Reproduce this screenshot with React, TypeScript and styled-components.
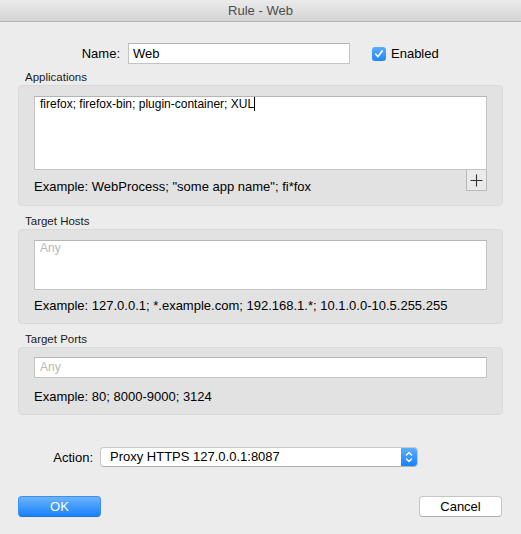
import React from "react";
import styled, { createGlobalStyle } from "styled-components";

const Global = createGlobalStyle`
  html, body { margin: 0; padding: 0; background: #ececec; }
  body { font-family: "Liberation Sans", Arial, sans-serif; color: #000; -webkit-font-smoothing: antialiased; }
  * { box-sizing: border-box; }
`;

const Win = styled.div`
  width: 521px;
  height: 534px;
  background: #ececec;
  display: flex;
  flex-direction: column;
  overflow: hidden;
`;

const TitleBar = styled.div`
  height: 22px;
  flex: none;
  background: linear-gradient(#ebebeb, #d4d4d4);
  border-bottom: 1px solid #b4b4b4;
  display: flex;
  align-items: center;
  justify-content: center;
  font-size: 13px;
  color: #4d4d4d;
`;

const Body = styled.div`
  display: flex;
  flex-direction: column;
  padding: 21px 18px 0 18px;
`;

const NameRow = styled.div`
  display: flex;
  align-items: center;
  height: 21px;
  padding-left: 62px;
`;

const FieldLabel = styled.span`
  font-size: 13px;
  width: 40px;
  text-align: right;
  margin-right: 8px;
`;

const TextInput = styled.div<{ $w?: number; $h?: number; $placeholder?: boolean; $small?: boolean; $lh?: number }>`
  width: ${(p) => (p.$w ? `${p.$w}px` : "auto")};
  height: ${(p) => p.$h ?? 21}px;
  background: #fff;
  border: 1px solid #c3c3c3;
  border-top-color: #b5b5b5;
  font-size: ${(p) => (p.$small ? 12 : 13)}px;
  line-height: ${(p) => p.$lh ?? (p.$small ? 14 : 17)}px;
  padding: ${(p) => (p.$small ? "0 5px" : "1px 4px 0 4px")};
  color: ${(p) => (p.$placeholder ? "#b8b8b8" : "#000")};
`;

const Caret = styled.span`
  display: inline-block;
  width: 1px;
  height: 14px;
  background: #000;
  vertical-align: -3px;
`;

const CheckWrap = styled.label`
  display: flex;
  align-items: center;
  margin-left: 22px;
  font-size: 13px;
  gap: 5px;
`;

const CheckBox = styled.span`
  width: 14px;
  height: 14px;
  border-radius: 3px;
  background: linear-gradient(#5aacfd, #1f86fd);
  display: flex;
  align-items: center;
  justify-content: center;
`;

const SectionLabel = styled.div<{ $top: number }>`
  font-size: 11.5px;
  line-height: 13px;
  margin-top: ${(p) => p.$top}px;
  margin-bottom: 1px;
  padding-left: 7px;
  color: #1a1a1a;
`;

const Group = styled.div<{ $pt: number; $pb: number }>`
  background: #e2e2e2;
  border: 1px solid #dadada;
  border-radius: 4px;
  padding: ${(p) => p.$pt}px 15px ${(p) => p.$pb}px 15px;
  display: flex;
  flex-direction: column;
`;

const Footer = styled.div`
  display: flex;
  align-items: flex-start;
  justify-content: space-between;
`;

const Example = styled.div<{ $mt: number }>`
  font-size: 13px;
  line-height: 16px;
  margin-top: ${(p) => p.$mt}px;
`;

const PlusButton = styled.div`
  width: 21px;
  height: 21px;
  border: 1px solid #b9b9b9;
  border-top: none;
  background: #eaeaea;
  display: flex;
  align-items: center;
  justify-content: center;
`;

const ActionRow = styled.div`
  display: flex;
  align-items: center;
  margin-top: 32px;
  padding-left: 32px;
`;

const ActionLabel = styled.span`
  font-size: 13px;
  width: 43px;
  text-align: right;
  margin-right: 7px;
`;

const Select = styled.div`
  width: 318px;
  height: 20px;
  background: #fff;
  border: 1px solid #c8c8c8;
  border-bottom-color: #b0b0b0;
  border-radius: 4px;
  display: flex;
  align-items: stretch;
  overflow: hidden;
  font-size: 13px;
`;

const SelectText = styled.span`
  flex: 1;
  padding-left: 9px;
  line-height: 18px;
`;

const Stepper = styled.span`
  width: 16px;
  background: linear-gradient(#5eaefd, #1782fd);
  display: flex;
  align-items: center;
  justify-content: center;
`;

const ButtonRow = styled.div`
  display: flex;
  justify-content: space-between;
  margin-top: 29px;
  padding-right: 1px;
`;

const Button = styled.div<{ $primary?: boolean }>`
  width: 83px;
  height: 21px;
  border-radius: 4px;
  display: flex;
  align-items: center;
  justify-content: center;
  font-size: 13px;
  ${(p) =>
    p.$primary
      ? `background: linear-gradient(#6cb4fb, #1881fd); color: #fff; border: 1px solid #3a8ff5; border-bottom-color:#1e6fd9;`
      : `background: #fff; color: #000; border: 1px solid #c6c6c6; border-bottom-color: #aeaeae;`}
`;

export default function App() {
  return (
    <>
      <Global />
      <Win>
        <TitleBar>Rule - Web</TitleBar>
        <Body>
          <NameRow>
            <FieldLabel>Name:</FieldLabel>
            <TextInput $w={222}>Web</TextInput>
            <CheckWrap>
              <CheckBox>
                <svg width="10" height="10" viewBox="0 0 10 10">
                  <path d="M1.8 5.2 L4 7.6 L8.3 1.8" fill="none" stroke="#fff" strokeWidth="1.6" strokeLinecap="round" strokeLinejoin="round" />
                </svg>
              </CheckBox>
              Enabled
            </CheckWrap>
          </NameRow>

          <SectionLabel $top={7}>Applications</SectionLabel>
          <Group $pt={10} $pb={10}>
            <TextInput $h={74} $small>
              firefox; firefox-bin; plugin-container; XUL<Caret />
            </TextInput>
            <Footer>
              <Example $mt={9}>Example: WebProcess; "some app name"; fi*fox</Example>
              <PlusButton>
                <svg width="13" height="13" viewBox="0 0 13 13">
                  <path d="M6.5 0.5 V12.5 M0.5 6.5 H12.5" stroke="#333" strokeWidth="1.1" />
                </svg>
              </PlusButton>
            </Footer>
          </Group>

          <SectionLabel $top={9}>Target Hosts</SectionLabel>
          <Group $pt={10} $pb={9}>
            <TextInput $h={50} $small $placeholder>Any</TextInput>
            <Example $mt={8}>Example: 127.0.0.1; *.example.com; 192.168.1.*; 10.1.0.0-10.5.255.255</Example>
          </Group>

          <SectionLabel $top={9}>Target Ports</SectionLabel>
          <Group $pt={9} $pb={9}>
            <TextInput $h={21} $small $placeholder $lh={18}>Any</TextInput>
            <Example $mt={11}>Example: 80; 8000-9000; 3124</Example>
          </Group>

          <ActionRow>
            <ActionLabel>Action:</ActionLabel>
            <Select>
              <SelectText>Proxy HTTPS 127.0.0.1:8087</SelectText>
              <Stepper>
                <svg width="8" height="12" viewBox="0 0 8 12">
                  <path d="M1.5 4 L4 1.5 L6.5 4 M1.5 8 L4 10.5 L6.5 8" fill="none" stroke="#fff" strokeWidth="1.4" strokeLinecap="round" strokeLinejoin="round" />
                </svg>
              </Stepper>
            </Select>
          </ActionRow>

          <ButtonRow>
            <Button $primary>OK</Button>
            <Button>Cancel</Button>
          </ButtonRow>
        </Body>
      </Win>
    </>
  );
}
